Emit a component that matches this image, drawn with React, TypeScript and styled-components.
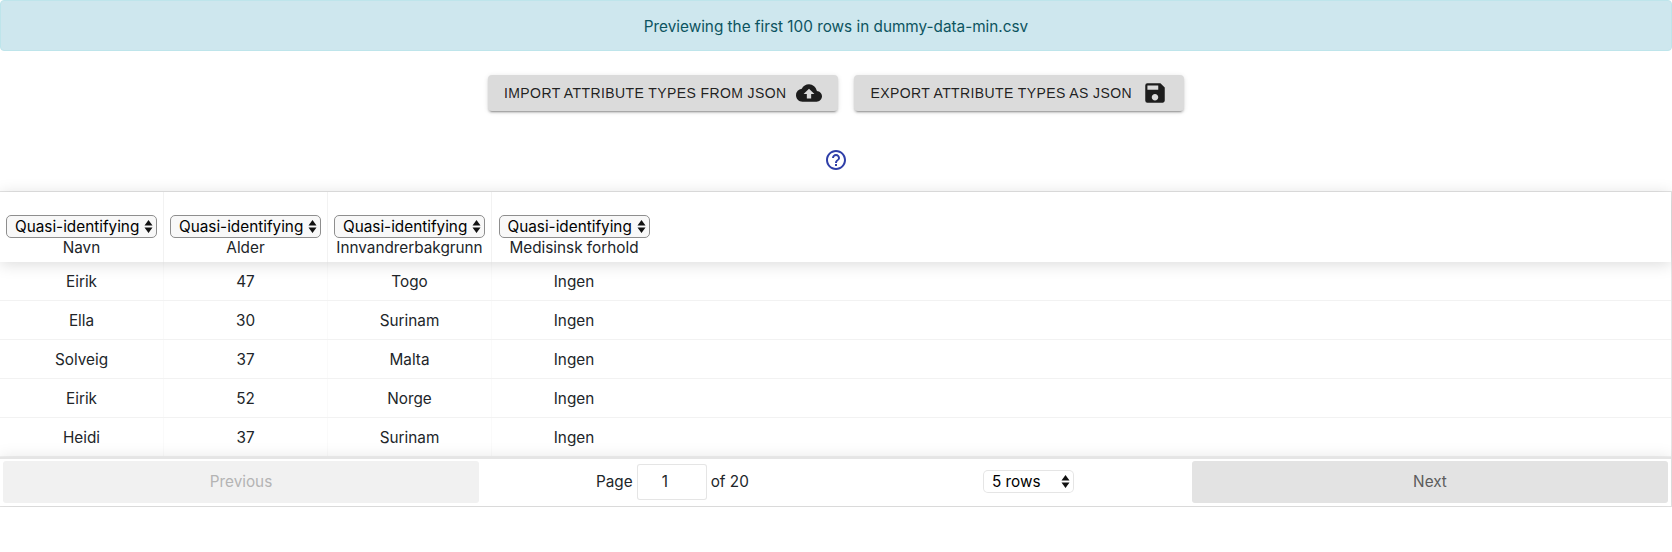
import React from 'react';
import styled, { createGlobalStyle } from 'styled-components';
import { MdCloudUpload, MdSave, MdHelpOutline } from 'react-icons/md';

const GlobalStyle = createGlobalStyle`
    html, body {
        margin: 0;
        padding: 0;
        background: #fff;
    }
    body {
        font-family: Inter, "Liberation Sans", sans-serif;
        color: #212529;
        font-size: 15.3px;
    }
    * {
        box-sizing: border-box;
    }
`;

const Alert = styled.div`
    height: 51px;
    display: flex;
    align-items: center;
    justify-content: center;
    padding-top: 1px;
    background-color: #cee7ee;
    border: 1px solid #bee5eb;
    border-radius: 4px;
    color: #0c5460;
    font-size: 15.3px;
`;

const ButtonRow = styled.div`
    display: flex;
    justify-content: center;
    gap: 16px;
    margin-top: 24px;
`;

const ActionButton = styled.button`
    display: flex;
    align-items: center;
    height: 36px;
    padding: 0 16px;
    border: 0;
    border-radius: 4px;
    background: #dbdbdb;
    color: rgba(0, 0, 0, 0.87);
    font-family: "Liberation Sans", sans-serif;
    font-size: 14px;
    font-weight: 400;
    letter-spacing: 0.4px;
    text-transform: uppercase;
    box-shadow: 0 3px 1px -2px rgba(0, 0, 0, 0.2), 0 2px 2px 0 rgba(0, 0, 0, 0.14), 0 1px 5px 0 rgba(0, 0, 0, 0.12);

    & svg {
        margin-left: 10px;
        font-size: 26px;
    }
`;

const HelpRow = styled.div`
    display: flex;
    justify-content: center;
    margin-top: 37px;
    height: 43px;
    color: #2f3fa8;
    font-size: 24px;
`;

const TableWrap = styled.div`
    border: 1px solid rgba(0, 0, 0, 0.1);
    border-left: 0;
    height: 316px;
    display: flex;
    flex-direction: column;
    box-shadow: 0 14px 14px -14px rgba(0, 0, 0, 0.12);
`;

const HeaderRow = styled.div`
    display: flex;
    height: 70px;
    flex: none;
    box-shadow: 0 2px 15px 0 rgba(0, 0, 0, 0.15);
    position: relative;
`;

const HeaderCell = styled.div`
    width: 164px;
    flex: none;
    padding: 23px 5px 0;
    display: flex;
    flex-direction: column;
    align-items: center;
    border-right: 1px solid rgba(0, 0, 0, 0.05);
    white-space: nowrap;
    line-height: 20px;

    &:last-child {
        border-right: 0;
    }
`;

const SelectWrap = styled.div<{ $width: number }>`
    position: relative;
    width: ${(p) => p.$width}px;
    height: 23px;
    flex: none;
    color: #000;
`;

const NativeSelect = styled.select<{ $plain?: boolean }>`
    appearance: none;
    width: 100%;
    height: 100%;
    padding: 0 0 0 8px;
    background: ${(p) => (p.$plain ? '#fff' : '#f8f8f8')};
    border: 1px solid ${(p) => (p.$plain ? 'rgba(0, 0, 0, 0.1)' : '#8e8e8e')};
    border-radius: 5px;
    color: #000;
    font-family: inherit;
    font-size: 15.3px;
    line-height: 21px;
`;

const Arrows = styled.svg`
    position: absolute;
    right: 4px;
    top: 4px;
    width: 9px;
    height: 15px;
    pointer-events: none;
`;

const BodyRow = styled.div`
    display: flex;
    height: 39px;
    flex: none;
    border-bottom: 1px solid rgba(0, 0, 0, 0.05);

    &:last-of-type {
        border-bottom: 0;
    }
`;

const BodyCell = styled.div`
    width: 164px;
    flex: none;
    display: flex;
    align-items: center;
    justify-content: center;
    border-right: 1px solid rgba(0, 0, 0, 0.02);

    &:last-child {
        border-right: 0;
    }
`;

const Footer = styled.div`
    flex: none;
    height: 49px;
    display: flex;
    align-items: center;
    padding: 2px 3px 4px;
    border-top: 2px solid rgba(0, 0, 0, 0.1);
    box-shadow: 0 0 15px 0 rgba(0, 0, 0, 0.1);
    position: relative;
`;

const PageButton = styled.button<{ $disabled?: boolean }>`
    width: 476px;
    height: 42px;
    flex: none;
    border: 0;
    border-radius: 3px;
    background: ${(p) => (p.$disabled ? '#f1f1f1' : '#e3e3e3')};
    color: ${(p) => (p.$disabled ? '#b4b4b4' : '#5c5c5c')};
    font-family: inherit;
    font-size: 15.3px;
`;

const FooterCenter = styled.div`
    flex: 1;
    display: flex;
    align-items: center;
    min-width: 0;
`;

const PageInfo = styled.div`
    display: flex;
    align-items: center;
    gap: 4px;
    margin-left: 117px;
    width: 387px;
`;

const PageInput = styled.input`
    width: 70px;
    height: 36px;
    padding: 0 0 0 24px;
    border: 1px solid rgba(0, 0, 0, 0.1);
    border-radius: 3px;
    font-family: inherit;
    font-size: 15.3px;
    color: #212529;
    outline: none;
    background: #fff;
`;

const rows = [
    ['Eirik', '47', 'Togo', 'Ingen'],
    ['Ella', '30', 'Surinam', 'Ingen'],
    ['Solveig', '37', 'Malta', 'Ingen'],
    ['Eirik', '52', 'Norge', 'Ingen'],
    ['Heidi', '37', 'Surinam', 'Ingen'],
];

const columns = ['Navn', 'Alder', 'Innvandrerbakgrunn', 'Medisinsk forhold'];

const SelectArrows: React.FC = () => (
    <Arrows viewBox="0 0 9 15">
        <path d="M4.5 1 L8.5 6.5 H0.5 Z M4.5 14 L0.5 8.5 H8.5 Z" fill="#111" />
    </Arrows>
);

const App: React.FC = () => {
    return (
        <>
            <GlobalStyle />
            <Alert>Previewing the first 100 rows in dummy-data-min.csv</Alert>
            <ButtonRow>
                <ActionButton>
                    Import attribute types from JSON
                    <MdCloudUpload />
                </ActionButton>
                <ActionButton>
                    Export attribute types as JSON
                    <MdSave />
                </ActionButton>
            </ButtonRow>
            <HelpRow>
                <MdHelpOutline />
            </HelpRow>
            <TableWrap>
                <HeaderRow>
                    {columns.map((name) => (
                        <HeaderCell key={name}>
                            <SelectWrap $width={151}>
                                <NativeSelect defaultValue="q">
                                    <option value="q">Quasi-identifying</option>
                                </NativeSelect>
                                <SelectArrows />
                            </SelectWrap>
                            {name}
                        </HeaderCell>
                    ))}
                </HeaderRow>
                {rows.map((row, i) => (
                    <BodyRow key={i}>
                        {row.map((cell, j) => (
                            <BodyCell key={j}>{cell}</BodyCell>
                        ))}
                    </BodyRow>
                ))}
                <Footer>
                    <PageButton $disabled>Previous</PageButton>
                    <FooterCenter>
                        <PageInfo>
                            Page
                            <PageInput defaultValue="1" />
                            of 20
                        </PageInfo>
                        <SelectWrap $width={91}>
                            <NativeSelect $plain defaultValue="5">
                                <option value="5">5 rows</option>
                            </NativeSelect>
                            <SelectArrows />
                        </SelectWrap>
                    </FooterCenter>
                    <PageButton>Next</PageButton>
                </Footer>
            </TableWrap>
        </>
    );
};

export default App;
